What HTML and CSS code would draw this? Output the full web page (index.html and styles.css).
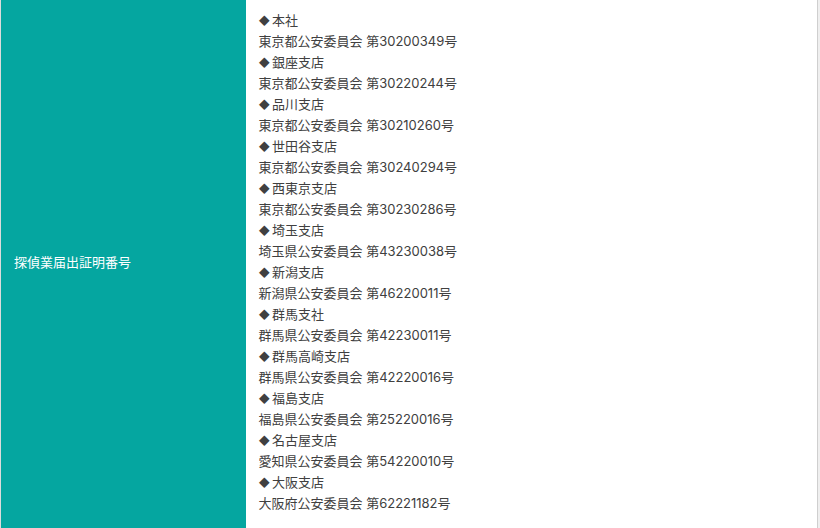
FILE: index.html
```html
<!DOCTYPE html>
<html lang="ja">
<head>
    <meta charset="UTF-8">
    <title>探偵業届出証明番号</title>
    <link rel="stylesheet" href="styles.css">
</head>
<body>
    <table class="info-table">
        <tr>
            <th class="info-label">探偵業届出証明番号</th>
            <td class="info-body">
                <span class="mark">◆</span>本社<br>
                東京都公安委員会 第30200349号<br>
                <span class="mark">◆</span>銀座支店<br>
                東京都公安委員会 第30220244号<br>
                <span class="mark">◆</span>品川支店<br>
                東京都公安委員会 第30210260号<br>
                <span class="mark">◆</span>世田谷支店<br>
                東京都公安委員会 第30240294号<br>
                <span class="mark">◆</span>西東京支店<br>
                東京都公安委員会 第30230286号<br>
                <span class="mark">◆</span>埼玉支店<br>
                埼玉県公安委員会 第43230038号<br>
                <span class="mark">◆</span>新潟支店<br>
                新潟県公安委員会 第46220011号<br>
                <span class="mark">◆</span>群馬支社<br>
                群馬県公安委員会 第42230011号<br>
                <span class="mark">◆</span>群馬高崎支店<br>
                群馬県公安委員会 第42220016号<br>
                <span class="mark">◆</span>福島支店<br>
                福島県公安委員会 第25220016号<br>
                <span class="mark">◆</span>名古屋支店<br>
                愛知県公安委員会 第54220010号<br>
                <span class="mark">◆</span>大阪支店<br>
                大阪府公安委員会 第62221182号
            </td>
        </tr>
    </table>
</body>
</html>
```

FILE: styles.css
```css
* {
    box-sizing: border-box;
}

body {
    margin: 0;
    background: #efefef;
    font-family: "Inter", "Noto Sans CJK JP", sans-serif;
    font-size: 13px;
    color: #404040;
}

.info-table {
    width: 818px;
    border-collapse: collapse;
    border-left: 1px solid #dcdcdc;
    border-right: 1px solid #cfcfcf;
    background: #fff;
}

.info-label {
    width: 245px;
    background: #05a6a0;
    color: #fff;
    font-weight: normal;
    text-align: left;
    vertical-align: middle;
    padding: 0 13px 6px;
}

.info-body {
    padding: 10px 13px 14px;
    line-height: 21px;
}

.mark {
    font-size: 11px;
    line-height: 1;
    margin-right: 2px;
}
```
